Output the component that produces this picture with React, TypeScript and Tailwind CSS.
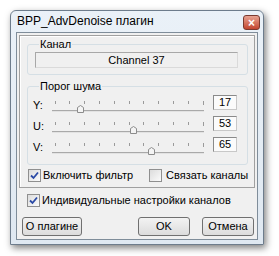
import React from "react";

const Check = ({ checked }: { checked: boolean }) => (
  <span className="flex h-[13px] w-[13px] shrink-0 items-center justify-center border border-[#8f8f8f] bg-gradient-to-br from-[#dcdcdc] to-[#fbfbfb]">
    {checked && (
      <svg width="9" height="9" viewBox="0 0 9 9">
        <path d="M1 4.5 L3.5 7 L8 1.5" fill="none" stroke="#2b4aa6" strokeWidth="1.8" />
      </svg>
    )}
  </span>
);

const Track = ({ value }: { value: number }) => {
  const ticks = Array.from({ length: 11 }, (_, i) => 2.5 + i * 14.8);
  const x = Math.round(2.5 + value * 1.48);
  return (
    <svg width="154" height="21" viewBox="0 0 154 21">
      {ticks.map((t, i) => (
        <line key={i} x1={Math.round(t) + 0.5} y1="6" x2={Math.round(t) + 0.5} y2={i === 10 ? 10 : 9} stroke="#9a9a9a" />
      ))}
      <line x1="0" y1="15.5" x2="152" y2="15.5" stroke="#a9a9a9" />
      <line x1="0" y1="16.5" x2="152" y2="16.5" stroke="#e2e2e2" />
      <path
        d={`M${x - 2.5} 17.5 L${x - 2.5} 12.5 L${x + 0.5} 10.5 L${x + 3.5} 12.5 L${x + 3.5} 17.5 Z`}
        fill="#f4f4f4"
        stroke="#8c8c8c"
      />
    </svg>
  );
};

const SliderRow = ({ label, value }: { label: string; value: number }) => (
  <div className="flex h-[21px] items-start">
    <span className="w-[19px] pt-[4px] text-[11px] leading-[13px]">{label}</span>
    <Track value={value} />
    <span className="ml-[7px] flex h-[15px] w-[24px] items-center justify-center border border-[#8a8a8a] border-b-[#c8c8c8] border-r-[#c8c8c8] bg-[#fbfbfb] text-[11px] leading-[13px]">
      {value}
    </span>
  </div>
);

const Button = ({ children, w }: { children: React.ReactNode; w: string }) => (
  <button className={`${w} h-[19px] rounded-[3px] border border-[#707070] bg-gradient-to-b from-[#f3f3f3] to-[#dcdcdc] text-[11px] leading-[13px] text-black`}>
    {children}
  </button>
);

export default function App() {
  return (
    <div className="h-[256px] w-[279px] bg-white pl-[10px] pt-[10px] font-['Liberation_Sans',sans-serif] text-black">
      <div className="flex h-[235px] w-[254px] flex-col rounded-t-[6px] border border-[#6d7c8c] bg-gradient-to-b from-[#eaf1f8] to-[#dfe8f1] shadow-[2px_3px_7px_rgba(0,0,0,0.5)]">
        <div className="flex h-[21px] items-center pl-[6px] pr-[3px]">
          <span className="flex-1 text-[12px] leading-[15px]">BPP_AdvDenoise плагин</span>
          <span className="mt-[2px] flex h-[15px] w-[17px] items-center justify-center rounded-[3px] border border-[#7a3a30] bg-gradient-to-b from-[#e7a291] to-[#c2442e] text-[12px] font-bold leading-[12px] text-white">
            ×
          </span>
        </div>
        <div className="mx-[5px] flex h-[208px] flex-col border border-[#7f8d9a] bg-[#f0f0f0]">
          <div className="mx-[2px] mt-[2px] flex h-[153px] flex-col border border-[#a0a0a0] shadow-[inset_1px_1px_0_#ffffff]">
            <fieldset className="ml-[7px] mt-[2px] w-[221px] rounded-[3px] border border-[#d5dfe5] pb-[6px] pl-[7px]">
              <legend className="ml-[4px] px-[1px] text-[11px] leading-[13px]">Канал</legend>
              <div className="mt-[1px] flex h-[16px] w-[203px] items-center justify-center border border-[#a8a8a8] border-b-[#dadada] border-r-[#dadada] text-[11px] leading-[13px]">
                Channel 37
              </div>
            </fieldset>
            <fieldset className="ml-[7px] mt-[5px] w-[221px] rounded-[3px] border border-[#d5dfe5] pb-[6px] pl-[5px]">
              <legend className="ml-[6px] px-[1px] text-[11px] leading-[13px]">Порог шума</legend>
              <div className="mt-[2px] flex flex-col">
                <SliderRow label="Y:" value={17} />
                <SliderRow label="U:" value={53} />
                <SliderRow label="V:" value={65} />
              </div>
            </fieldset>
            <div className="mt-[4px] flex items-center text-[11px] leading-[13px]">
              <span className="ml-[8px] flex items-center gap-[2px]">
                <Check checked />
                <span>Включить фильтр</span>
              </span>
              <span className="ml-[16px] flex items-center gap-[4px]">
                <Check checked={false} />
                <span>Связать каналы</span>
              </span>
            </div>
          </div>
          <div className="ml-[10px] mt-[6px] flex items-center gap-[2px] text-[11px] leading-[13px]">
            <Check checked />
            <span>Индивидуальные настройки каналов</span>
          </div>
          <div className="mt-[6px] flex">
            <span className="ml-[5px]">
              <Button w="w-[60px]">О плагине</Button>
            </span>
            <span className="ml-[56px]">
              <Button w="w-[52px]">OK</Button>
            </span>
            <span className="ml-[12px]">
              <Button w="w-[52px]">Отмена</Button>
            </span>
          </div>
        </div>
      </div>
    </div>
  );
}
